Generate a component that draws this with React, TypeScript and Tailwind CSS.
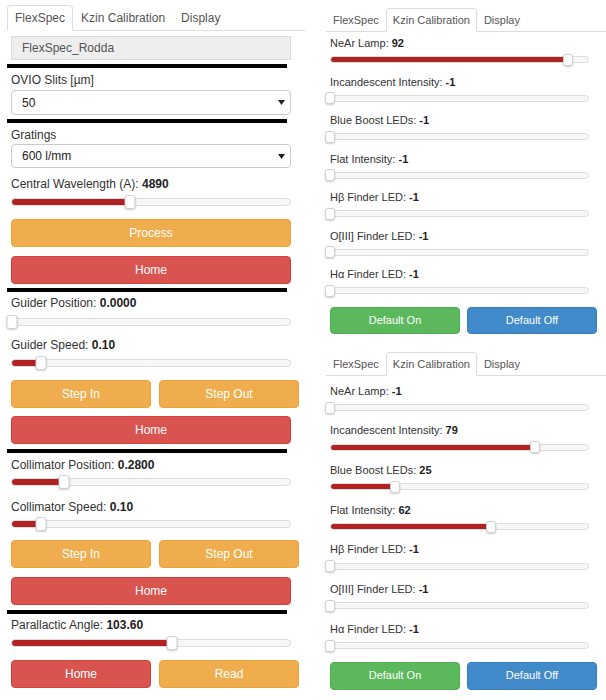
import React from "react";

const font = "font-['Liberation_Sans',Arial,Helvetica,sans-serif]";

const btnColors: Record<string, string> = {
  orange: "bg-[#f0ad4e] border-[#eea236]",
  red: "bg-[#d9534f] border-[#d43f3a]",
  green: "bg-[#5cb85c] border-[#4cae4c]",
  blue: "bg-[#428bca] border-[#357ebd]",
};

function Tabs({ active, small }: { active: number; small?: boolean }) {
  const names = ["FlexSpec", "Kzin Calibration", "Display"];
  return (
    <div
      className={
        small
          ? "flex h-[24px] w-full border-b border-[#ddd] text-[11px]"
          : "ml-[7px] flex h-[26px] w-[298px] border-b border-[#ddd] text-[12px]"
      }
    >
      {names.map((n, i) => (
        <div
          key={n}
          className={
            (small ? "h-[24px] px-[6px] " : "h-[26px] px-[7px] ") +
            "-mb-px flex items-center rounded-t-[4px] border text-[#555] " +
            (i === active ? "border-[#ddd] border-b-white bg-white" : "border-transparent")
          }
        >
          {n}
        </div>
      ))}
    </div>
  );
}

function Slider({ pct, small }: { pct: number; small?: boolean }) {
  const p = Math.max(0, pct);
  return (
    <div className={small ? "relative flex h-[12px] w-[259px] items-center" : "relative flex h-[14px] w-[280px] items-center"}>
      <div
        className={
          (small ? "h-[7px] " : "h-[8px] ") +
          "w-full overflow-hidden rounded-full border border-[#dcdcdc] bg-[#f7f7f7]"
        }
      >
        <div className="h-full bg-[#b22222]" style={{ width: `${p}%` }} />
      </div>
      <div
        className={
          (small ? "h-[12px] w-[10px] " : "h-[14px] w-[11px] ") +
          "absolute top-0 -translate-x-1/2 rounded-[3px] border border-[#d0d0d0] bg-white shadow-[0_1px_2px_rgba(0,0,0,0.2)]"
        }
        style={{ left: `${p}%` }}
      />
    </div>
  );
}

function Btn({ color, children, className }: { color: string; children: React.ReactNode; className?: string }) {
  return (
    <div
      className={
        "flex items-center justify-center rounded-[4px] border text-white " + btnColors[color] + " " + (className || "")
      }
    >
      {children}
    </div>
  );
}

function Bar({ className }: { className?: string }) {
  return <div className={"-ml-[4px] h-[4px] w-[280px] bg-black " + (className || "")} />;
}

function Label({ text, value, className }: { text: string; value?: string; className?: string }) {
  return (
    <div className={"h-[16px] leading-[16px] text-[#333] " + (className || "")}>
      {text}
      {value !== undefined && <b className="text-[#222]">{value}</b>}
    </div>
  );
}

function Select({ value, className }: { value: string; className?: string }) {
  return (
    <div
      className={
        "flex w-[280px] items-center justify-between rounded-[4px] border border-[#ccc] bg-white pl-[10px] pr-[5px] text-[#222] " +
        (className || "")
      }
    >
      <span>{value}</span>
      <svg width="7" height="5" viewBox="0 0 7 5">
        <path d="M0 0H7L3.5 5Z" fill="#222" />
      </svg>
    </div>
  );
}

function KzinPanel({
  values,
  rowGap,
  first,
  sliderGap,
  btnH,
  className,
}: {
  values: number[];
  rowGap: string;
  first: string;
  sliderGap: string;
  btnH: string;
  className?: string;
}) {
  const names = [
    "NeAr Lamp: ",
    "Incandescent Intensity: ",
    "Blue Boost LEDs: ",
    "Flat Intensity: ",
    "Hβ Finder LED: ",
    "O[III] Finder LED: ",
    "Hα Finder LED: ",
  ];
  return (
    <div className={className}>
      <Tabs active={1} small />
      <div className={"flex flex-col pl-[4px] " + rowGap + " " + first}>
        {names.map((n, i) => (
          <div key={n}>
            <div className="h-[15px] leading-[15px] text-[11px] text-[#333]">
              {n}
              <b className="text-[#222]">{values[i]}</b>
            </div>
            <div className={sliderGap}>
              <Slider pct={values[i]} small />
            </div>
          </div>
        ))}
      </div>
      <div className={"ml-[4px] mt-[10px] flex w-[267px] gap-[7px] text-[11px] " + btnH}>
        <Btn color="green" className="flex-1">
          Default On
        </Btn>
        <Btn color="blue" className="flex-1">
          Default Off
        </Btn>
      </div>
    </div>
  );
}

export default function App() {
  return (
    <div className={"flex h-[700px] w-[606px] overflow-hidden bg-white " + font}>
      {/* left: FlexSpec tab */}
      <div className="w-[306px] shrink-0 pt-[5px] text-[12px]">
        <Tabs active={0} />
        <div className="pl-[11px]">
          <div className="mt-[5px] flex h-[24px] w-[280px] items-center border border-[#ddd] bg-[#eee] px-[10px] text-[#555]">
            FlexSpec_Rodda
          </div>
          <Bar className="mt-[4px]" />
          <Label text="OVIO Slits [µm]" className="mt-[4px]" />
          <Select value="50" className="mt-[2px] h-[25px]" />
          <Bar className="mt-[4px]" />
          <Label text="Gratings" className="mt-[4px]" />
          <Select value="600 l/mm" className="mt-[1px] h-[24px]" />
          <Label text="Central Wavelength (A): " value="4890" className="mt-[8px]" />
          <div className="mt-[3px]">
            <Slider pct={42.4} />
          </div>
          <Btn color="orange" className="mt-[10px] h-[28px] w-[280px]">
            Process
          </Btn>
          <Btn color="red" className="mt-[9px] h-[28px] w-[280px]">
            Home
          </Btn>
          <Bar className="mt-[4px]" />

          <Label text="Guider Position: " value="0.0000" className="mt-[3px]" />
          <div className="mt-[4px]">
            <Slider pct={0.5} />
          </div>
          <Label text="Guider Speed: " value="0.10" className="mt-[8px]" />
          <div className="mt-[3px]">
            <Slider pct={10.6} />
          </div>
          <div className="mt-[10px] flex h-[28px] w-[288px] gap-[8px]">
            <Btn color="orange" className="flex-1">
              Step In
            </Btn>
            <Btn color="orange" className="flex-1">
              Step Out
            </Btn>
          </div>
          <Btn color="red" className="mt-[8px] h-[28px] w-[280px]">
            Home
          </Btn>
          <Bar className="mt-[5px]" />

          <Label text="Collimator Position: " value="0.2800" className="mt-[4px]" />
          <div className="mt-[2px]">
            <Slider pct={19} />
          </div>
          <Label text="Collimator Speed: " value="0.10" className="mt-[10px]" />
          <div className="mt-[2px]">
            <Slider pct={10.6} />
          </div>
          <div className="mt-[9px] flex h-[28px] w-[288px] gap-[8px]">
            <Btn color="orange" className="flex-1">
              Step In
            </Btn>
            <Btn color="orange" className="flex-1">
              Step Out
            </Btn>
          </div>
          <Btn color="red" className="mt-[9px] h-[28px] w-[280px]">
            Home
          </Btn>
          <Bar className="mt-[5px]" />

          <Label text="Parallactic Angle: " value="103.60" className="mt-[3px]" />
          <div className="mt-[3px]">
            <Slider pct={57.6} />
          </div>
          <div className="mt-[10px] flex h-[28px] w-[288px] gap-[8px]">
            <Btn color="red" className="flex-1">
              Home
            </Btn>
            <Btn color="orange" className="flex-1">
              Read
            </Btn>
          </div>
        </div>
      </div>

      {/* right: two Kzin Calibration captures */}
      <div className="ml-[20px] flex-1">
        <KzinPanel
          values={[92, -1, -1, -1, -1, -1, -1]}
          className="pt-[8px]"
          first="mt-[4px]"
          rowGap="gap-[9px]"
          sliderGap="mt-[2.5px]"
          btnH="h-[27px]"
        />
        <KzinPanel
          values={[-1, 79, 25, 62, -1, -1, -1]}
          className="mt-[18.5px]"
          first="mt-[7.5px]"
          rowGap="gap-[9.7px]"
          sliderGap="mt-[3px]"
          btnH="h-[28px]"
        />
      </div>
    </div>
  );
}
